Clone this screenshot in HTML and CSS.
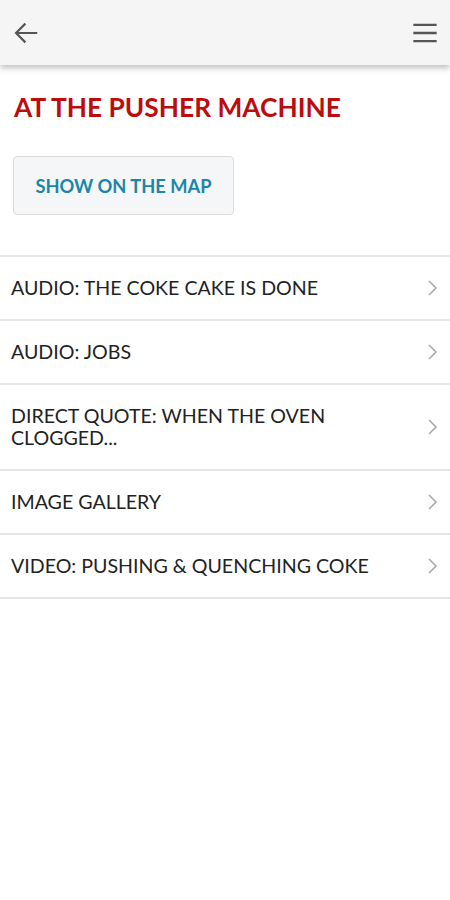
FILE: index.html
```html
<!DOCTYPE html>
<html>
<head>
<meta charset="utf-8">
<link rel="stylesheet" href="styles.css">
</head>
<body>
<header class="topbar">
  <svg class="icon" width="30" height="30" viewBox="0 0 24 24"><path d="M21 12H4M11.5 4.5L4 12l7.5 7.5" fill="none" stroke="#555" stroke-width="1.7"/></svg>
  <svg class="icon" width="28" height="28" viewBox="0 0 24 24"><path d="M2 5h20M2 12h20M2 19h20" fill="none" stroke="#555" stroke-width="2"/></svg>
</header>
<main>
  <h1 class="title">AT THE PUSHER MACHINE</h1>
  <div class="btnwrap"><button class="mapbtn">SHOW ON THE MAP</button></div>
  <ul class="list">
    <li class="row"><span>AUDIO: THE COKE CAKE IS DONE</span><svg class="chev" width="12" height="18" viewBox="0 0 12 18"><path d="M2 2l7 7-7 7" fill="none" stroke="#aaa" stroke-width="1.6"/></svg></li>
    <li class="row"><span>AUDIO: JOBS</span><svg class="chev" width="12" height="18" viewBox="0 0 12 18"><path d="M2 2l7 7-7 7" fill="none" stroke="#aaa" stroke-width="1.6"/></svg></li>
    <li class="row"><span>DIRECT QUOTE: WHEN THE OVEN<br>CLOGGED...</span><svg class="chev" width="12" height="18" viewBox="0 0 12 18"><path d="M2 2l7 7-7 7" fill="none" stroke="#aaa" stroke-width="1.6"/></svg></li>
    <li class="row"><span>IMAGE GALLERY</span><svg class="chev" width="12" height="18" viewBox="0 0 12 18"><path d="M2 2l7 7-7 7" fill="none" stroke="#aaa" stroke-width="1.6"/></svg></li>
    <li class="row"><span>VIDEO: PUSHING &amp; QUENCHING COKE</span><svg class="chev" width="12" height="18" viewBox="0 0 12 18"><path d="M2 2l7 7-7 7" fill="none" stroke="#aaa" stroke-width="1.6"/></svg></li>
  </ul>
</main>
</body>
</html>
```
FILE: styles.css
```css
* { box-sizing: border-box; }
body {
  margin: 0;
  font-family: Lato, "Liberation Sans", sans-serif;
  background: #fff;
  width: 450px;
}
.topbar {
  height: 65px;
  background: #f5f5f5;
  display: flex;
  align-items: center;
  justify-content: space-between;
  padding: 0 11px 0 11px;
  box-shadow: 0 3px 6px rgba(0,0,0,0.25);
  position: relative;
  z-index: 1;
}
.icon { display: block; }
.title {
  margin: 0;
  padding: 27px 14px 0;
  font-size: 26.3px;
  line-height: 30px;
  font-weight: 700;
  color: #bb0d0d;
}
.btnwrap { padding: 34px 13px 0; }
.mapbtn {
  font-family: inherit;
  width: 221px;
  height: 59px;
  background: #f5f6f7;
  border: 1px solid #dcdcdc;
  border-radius: 4px;
  font-size: 18.3px;
  font-weight: 700;
  color: #1b87a8;
  padding: 0;
}
.list {
  list-style: none;
  margin: 40px 0 0;
  padding: 0;
  border-top: 2px solid #e6e6e6;
}
.row {
  display: flex;
  align-items: center;
  justify-content: space-between;
  min-height: 64px;
  padding: 0 11px 0 11px;
  border-bottom: 2px solid #e6e6e6;
  font-size: 19.6px;
  line-height: 22px;
  color: #222;
}
.row:nth-child(3) { min-height: 86px; }
.chev { flex: none; }
```
